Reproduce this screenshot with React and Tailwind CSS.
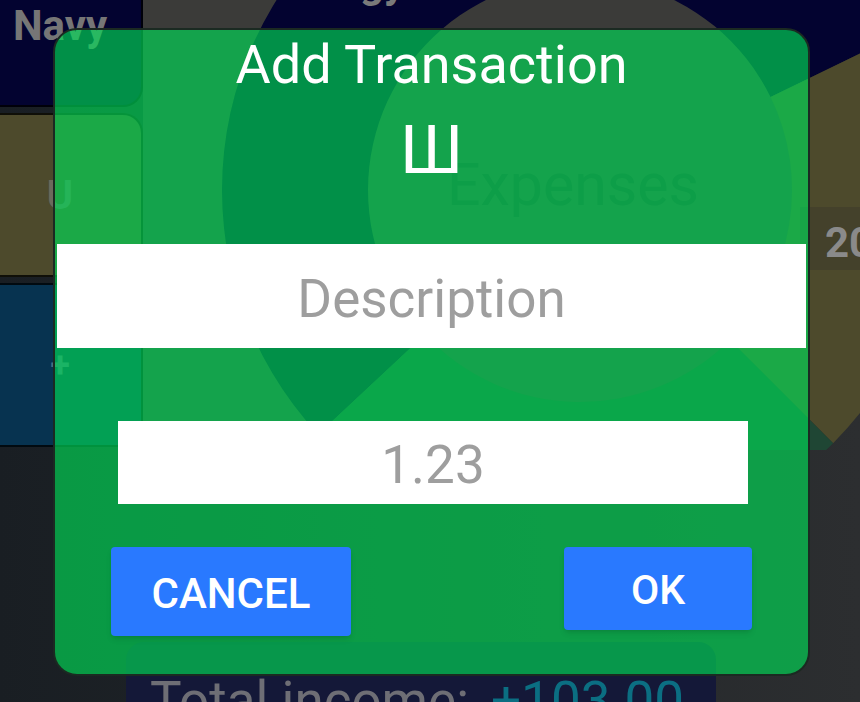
const CX = 437;
const CY = 190;
const R_OUT = 358;
const R_IN = 212;

// annular sector path, angles in degrees, clockwise from 3 o'clock
function slice(a1, a2) {
  const rad = (d) => (d * Math.PI) / 180;
  const pt = (r, a) => [CX + r * Math.cos(rad(a)), CY + r * Math.sin(rad(a))];
  const [x1, y1] = pt(R_OUT, a1);
  const [x2, y2] = pt(R_OUT, a2);
  const [x3, y3] = pt(R_IN, a2);
  const [x4, y4] = pt(R_IN, a1);
  const large = a2 - a1 > 180 ? 1 : 0;
  return `M${x1} ${y1} A${R_OUT} ${R_OUT} 0 ${large} 1 ${x2} ${y2} L${x3} ${y3} A${R_IN} ${R_IN} 0 ${large} 0 ${x4} ${y4} Z`;
}

const DonutChart = () => (
  <svg className="absolute left-0 top-0" width="717" height="450" viewBox="0 0 717 450">
    <rect x="0" y="0" width="667" height="450" fill="#3b3b39" />
    <path d={slice(137, 334)} fill="#030330" />
    <path d={slice(334, 405)} fill="#4d4a2c" />
    <path d={slice(45, 137)} fill="#1f4634" />
  </svg>
);

const Background = () => (
  <div className="absolute inset-0 flex flex-col bg-gradient-to-r from-[#191e23] to-[#2c2e30]">
    <div className="flex h-[450px]">
      {/* category cards */}
      <div className="-ml-[23px] -mt-[57px] flex w-[166px] shrink-0 flex-col gap-[6px]">
        <div className="flex h-[164px] items-center justify-center rounded-[20px] border-2 border-black/80 bg-[#030330]">
          <span className="text-[42px] font-bold leading-[49px] text-[#767676]">Navy</span>
        </div>
        <div className="flex h-[164px] items-center justify-center rounded-[20px] border-2 border-black/80 bg-[#4d4a2c]">
          <span className="text-[40px] font-bold leading-[47px] text-[#6c6a5c]">U</span>
        </div>
        <div className="flex h-[164px] items-center justify-center rounded-[20px] border-2 border-black/80 bg-[#073350]">
          <span className="text-[36px] font-bold leading-[42px] text-[#4a6c80]">+</span>
        </div>
      </div>

      {/* chart */}
      <div className="relative flex-1">
        <DonutChart />
        <span className="absolute left-[132px] top-[-42px] text-[42px] font-bold leading-[49px] text-[#7a7a7a]">
          Energy
        </span>
        <span className="absolute left-[304px] top-[150px] text-[59px] leading-[69px] text-[#262b30]">
          Expenses
        </span>
        <div className="absolute left-[657px] top-[207px] h-[63px] w-[200px] bg-[#44412b] pl-[25px] pt-[11px]">
          <span className="text-[42px] font-bold leading-[49px] text-[#8a8a8a]">20</span>
        </div>
      </div>
    </div>

    <div className="mt-auto ml-[126px] h-[60px] w-[590px] rounded-t-[18px] bg-[#141838] pl-[24px] pt-[28px]">
      <span className="whitespace-nowrap text-[53px] leading-[62px]">
        <span className="text-[#6e6e75]">Total income:</span>
        <span className="ml-[22px] text-[#0b6e82]">+103.00</span>
      </span>
    </div>
  </div>
);

const AddTransactionDialog = () => (
  <div className="absolute left-[53px] top-[28px] flex h-[648px] w-[757px] flex-col items-center rounded-[24px] border-2 border-[#1b2a22] bg-[rgba(0,220,86,0.65)]">
    <h2 className="mt-[4px] text-[54px] font-normal leading-[62px] text-white">Add Transaction</h2>
    <div className="mt-[15px] text-[67px] leading-[78px] text-white">Ш</div>

    <div className="mt-[55px] flex h-[104px] w-[749px] items-center justify-center bg-white pt-[5px]">
      <span className="text-[53px] leading-[62px] text-[#9e9e9e]">Description</span>
    </div>

    <div className="mt-[73px] ml-[63px] flex h-[83px] w-[630px] items-center justify-center self-start bg-white pt-[4px]">
      <span className="text-[53px] leading-[62px] text-[#9e9e9e]">1.23</span>
    </div>

    <div className="mt-[43px] flex w-full items-start justify-between px-[56px]">
      <button className="flex h-[89px] w-[240px] items-center justify-center rounded-[4px] bg-[#2979ff] pt-[3px] text-[42px] font-medium leading-[49px] text-white shadow-md">
        CANCEL
      </button>
      <button className="flex h-[83px] w-[188px] items-center justify-center rounded-[4px] bg-[#2979ff] pt-[3px] text-[41px] font-medium leading-[48px] text-white shadow-md">
        OK
      </button>
    </div>
  </div>
);

export default function App() {
  return (
    <div className="relative h-[702px] w-[860px] overflow-hidden font-[family-name:Roboto,sans-serif]">
      <Background />
      <AddTransactionDialog />
    </div>
  );
}
